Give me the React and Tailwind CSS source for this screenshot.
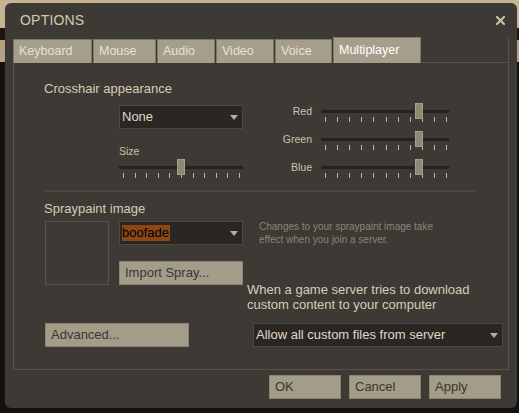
import React from 'react';

const FONT = "font-['Liberation_Sans',Arial,sans-serif]";

function Slider({ width, thumb, first, last }) {
  const ticks = Array.from({ length: 11 }, (_, i) => first + ((last - first) * i) / 10);
  return (
    <div className="relative h-[20px] shrink-0" style={{ width }}>
      <div className="absolute left-0 right-0 top-[7px] h-[3px] bg-[#24211e]" />
      {ticks.map((t, i) => (
        <div key={i} className="absolute top-[14px] h-[5px] w-px bg-[#bdb59f]" style={{ left: Math.round(t) }} />
      ))}
      <div className="absolute top-0 h-[16px] w-[8px] bg-[#8f8875] border border-[#a69e8a]" style={{ left: thumb }} />
    </div>
  );
}

function Dropdown({ children, className = '' }) {
  return (
    <div className={`flex items-center justify-between h-[24px] bg-[#2a2623] border border-[#4b4741] pl-[2px] pr-[4px] text-[13px] text-[#e0d9c3] ${className}`}>
      <div className="flex items-center">{children}</div>
      <svg width="8" height="5" viewBox="0 0 8 5"><path d="M0 0h8L4 5z" fill="#b7af99" /></svg>
    </div>
  );
}

function Button({ children, className = '' }) {
  return (
    <div className={`flex items-center h-[24px] bg-[#a39c88] border border-[#8a8373] pl-[5px] text-[13px] text-[#3a3631] ${className}`}>
      {children}
    </div>
  );
}

function ColorRow({ label }) {
  return (
    <div className="flex items-start h-[28px]">
      <div className="w-[62px] text-right text-[10.5px] leading-[16px] text-[#cbc3ab]">{label}</div>
      <div className="ml-[9px]">
        <Slider width={128} thumb={94} first={4} last={125} />
      </div>
    </div>
  );
}

const tabs = [
  { name: 'Keyboard', w: 'w-[79px]' },
  { name: 'Mouse', w: 'w-[63px]' },
  { name: 'Audio', w: 'w-[58px]' },
  { name: 'Video', w: 'w-[58px]' },
  { name: 'Voice', w: 'w-[57px]' },
];

export default function App() {
  return (
    <div className={`w-[519px] h-[413px] overflow-hidden pl-[5px] pt-[3px] bg-[linear-gradient(to_bottom,#c4b491_0px,#c4b491_28px,#1b1512_28px,#1b1512_40px,#b2a281_40px,#b2a281_62px,#15100e_62px)] ${FONT}`}>
      <div className="w-[512px] h-[405px] rounded-[6px] bg-[#3d3935] flex flex-col">
        {/* title */}
        <div className="flex items-center justify-between h-[34px] pl-[15px] pr-[12px]">
          <span className="text-[14px] text-[#d2cab2] tracking-[0.2px]">OPTIONS</span>
          <svg width="9" height="9" viewBox="0 0 9 9">
            <path d="M1 1l7 7M8 1l-7 7" stroke="#cbc3ab" strokeWidth="2" strokeLinecap="square" />
          </svg>
        </div>

        {/* tabs */}
        <div className="flex items-end h-[26px] ml-[8px] mr-[8px]">
          {tabs.map((t) => (
            <div key={t.name} className={`${t.w} h-[24px] mr-px flex items-center pl-[5px] bg-[#a59e8a] border border-[#7d7666] border-b-0 text-[12.5px] text-[#e6e2d4]`}>
              {t.name}
            </div>
          ))}
          <div className="w-[88px] h-[26px] flex items-center pl-[5px] bg-[#a59e8a] border border-[#7d7666] border-b-0 text-[12.5px] text-white">
            Multiplayer
          </div>
          <div className="flex-1 h-[26px] border-b border-r border-[#57534c]" />
        </div>

        {/* panel */}
        <div className="mx-[8px] w-[496px] h-[307px] border border-t-0 border-[#57534c] pl-[30px] pt-[18px] flex flex-col">
          <div className="text-[13px] leading-[16px] text-[#d5cdb5]">Crosshair appearance</div>

          <div className="flex mt-[6px]">
            <div className="ml-[75px] w-[124px] flex flex-col pt-[2px]">
              <Dropdown>None</Dropdown>
              <div className="mt-[16px] text-[10.5px] leading-[12px] text-[#cbc3ab]">Size</div>
              <div className="mt-[2px]">
                <Slider width={124} thumb={58} first={4} last={120} />
              </div>
            </div>
            <div className="ml-[7px] flex flex-col">
              <ColorRow label="Red" />
              <ColorRow label="Green" />
              <ColorRow label="Blue" />
            </div>
          </div>

          <div className="mt-[3px] ml-[1px] w-[432px] h-[2px] bg-[#4a4641]" />

          <div className="mt-[9px] text-[13px] leading-[16px] text-[#d5cdb5]">Spraypaint image</div>

          <div className="flex mt-[4px] h-[90px]">
            <div className="ml-[1px] w-[64px] h-[64px] border border-[#57534c]" />
            <div className="ml-[10px] w-[124px] flex flex-col">
              <Dropdown>
                <span className="bg-[#8c4716] text-black pr-px leading-[16px]">boofade</span>
              </Dropdown>
              <Button className="mt-[16px]">Import Spray...</Button>
            </div>
            <div className="ml-[4px] flex flex-col">
              <div className="ml-[12px] text-[10px] leading-[12.5px] text-[#8b8575]">
                Changes to your spraypaint image take
                <br />
                effect when you join a server.
              </div>
              <div className="mt-[36px] text-[13px] leading-[15px] text-[#d5cdb5]">
                When a game server tries to download
                <br />
                custom content to your computer
              </div>
            </div>
          </div>

          <div className="flex mt-[12px]">
            <Button className="ml-[1px] w-[144px]">Advanced...</Button>
            <Dropdown className="ml-[64px] w-[250px]">Allow all custom files from server</Dropdown>
          </div>
        </div>

        {/* bottom buttons */}
        <div className="flex justify-end gap-[8px] pr-[16px] mt-[5px]">
          <Button className="w-[72px]">OK</Button>
          <Button className="w-[72px]">Cancel</Button>
          <Button className="w-[72px]">Apply</Button>
        </div>
      </div>
    </div>
  );
}
